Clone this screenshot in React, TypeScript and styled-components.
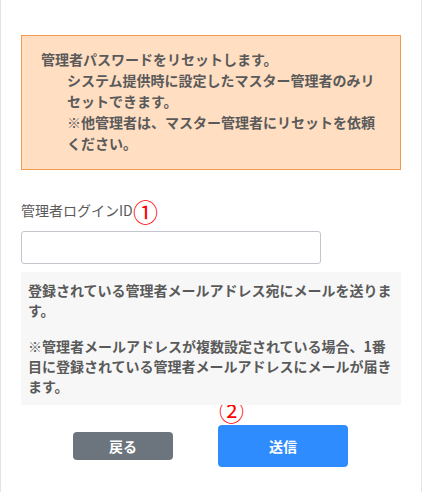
import React from "react";
import styled, { createGlobalStyle } from "styled-components";

const GlobalStyle = createGlobalStyle`
  html, body { margin: 0; padding: 0; background: #ffffff; }
  body { font-family: "Noto Sans CJK JP", "Noto Sans", sans-serif; color: #555555; }
  * { box-sizing: border-box; }
`;

const Page = styled.div`
  position: relative;
  width: 422px;
  min-height: 492px;
  border-left: 1px solid #e4e4e4;
  border-right: 1px solid #e4e4e4;
  padding: 35px 20px 0 20px;
  display: flex;
  flex-direction: column;
`;

const Notice = styled.div`
  background: #ffdec2;
  border: 1px solid #f39a4c;
  padding: 13px 19px 15px 19px;
  font-size: 14px;
  font-weight: 700;
  line-height: 21px;
  color: #5a5a5a;
`;

const NoticeBody = styled.div`
  padding-left: 26px;
`;

const Label = styled.label`
  margin-top: 30px;
  font-size: 14px;
  line-height: 20px;
  color: #5a5a5a;
`;

const TextInput = styled.input`
  margin-top: 11px;
  width: 300px;
  height: 33px;
  border: 1px solid #c4c4cc;
  border-radius: 3px;
  padding: 0 8px;
  font-size: 14px;
  background: #fff;
  outline: none;
`;

const InfoBox = styled.div`
  position: relative;
  z-index: 1;
  margin-top: 8px;
  background: #f7f7f7;
  padding: 8px 7px 9px 7px;
  font-size: 14px;
  font-weight: 700;
  line-height: 20px;
  color: #5a5a5a;
  display: flex;
  flex-direction: column;
  gap: 16px;
`;

const Para = styled.p`
  margin: 0;
`;

const ButtonRow = styled.div`
  margin-top: 20px;
  display: flex;
  justify-content: center;
  align-items: center;
  gap: 45px;
  padding-right: 1px;
`;

const Button = styled.button<{ $primary?: boolean }>`
  border: none;
  border-radius: 4px;
  width: ${(p) => (p.$primary ? "130px" : "100px")};
  height: ${(p) => (p.$primary ? "42px" : "28px")};
  background: ${(p) => (p.$primary ? "#2f8cff" : "#6c757d")};
  color: #ffffff;
  font-family: "Noto Sans CJK JP", sans-serif;
  font-size: 14px;
  font-weight: 700;
  cursor: pointer;
`;

const Marker = styled.span<{ $x: number; $y: number }>`
  position: absolute;
  left: ${(p) => p.$x}px;
  top: ${(p) => p.$y}px;
  color: #ff0000;
  font-family: "Noto Sans CJK JP", sans-serif;
  font-size: 25px;
  line-height: 25px;
  z-index: 0;
`;

export default function App() {
  return (
    <>
      <GlobalStyle />
      <Page>
        <Notice>
          <div>管理者パスワードをリセットします。</div>
          <NoticeBody>
            <div>システム提供時に設定したマスター管理者のみリセットできます。</div>
            <div>※他管理者は、マスター管理者にリセットを依頼ください。</div>
          </NoticeBody>
        </Notice>
        <Label htmlFor="login-id">管理者ログインID</Label>
        <TextInput id="login-id" type="text" />
        <InfoBox>
          <Para>登録されている管理者メールアドレス宛にメールを送ります。</Para>
          <Para>
            ※管理者メールアドレスが複数設定されている場合、1番目に登録されている管理者メールアドレスにメールが届きます。
          </Para>
        </InfoBox>
        <ButtonRow>
          <Button type="button">戻る</Button>
          <Button type="button" $primary>
            送信
          </Button>
        </ButtonRow>
        <Marker $x={132} $y={199}>①</Marker>
        <Marker $x={218} $y={398}>②</Marker>
      </Page>
    </>
  );
}
